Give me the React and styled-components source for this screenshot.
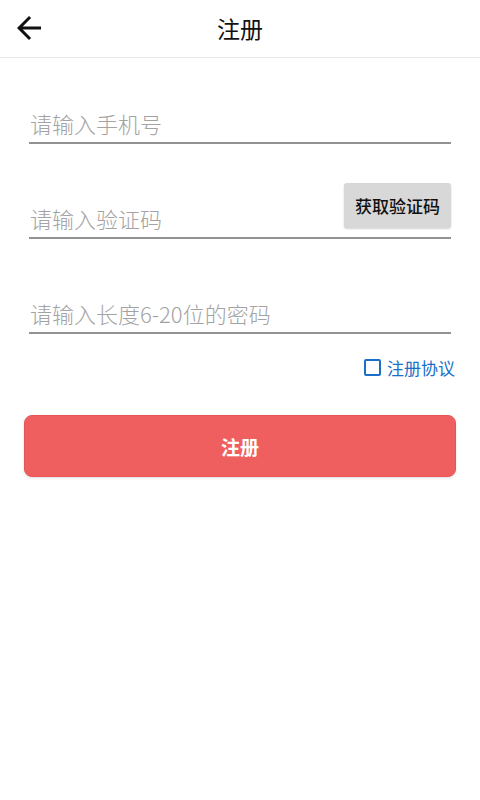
import React, { useState } from "react";
import styled, { createGlobalStyle } from "styled-components";

const GlobalStyle = createGlobalStyle`
  html, body {
    margin: 0;
    padding: 0;
    background: #ffffff;
    font-family: "Noto Sans CJK SC", "Noto Sans", sans-serif;
  }
  * {
    box-sizing: border-box;
  }
`;

export default function App() {
  const [agree, setAgree] = useState(false);
  return (
    <Root>
      <GlobalStyle />
      <Header>
        <BackBtn aria-label="back">
          <svg width="36" height="36" viewBox="0 0 24 24">
            <path
              fill="#111"
              d="M20 11H7.83l5.59-5.59L12 4l-8 8 8 8 1.41-1.41L7.83 13H20v-2z"
            />
          </svg>
        </BackBtn>
        <Title>注册</Title>
      </Header>

      <Form>
        <Field $h={86}>
          <Input placeholder="请输入手机号" />
        </Field>
        <Field>
          <Input placeholder="请输入验证码" />
          <CodeBtn>获取验证码</CodeBtn>
        </Field>
        <Field>
          <Input type="password" placeholder="请输入长度6-20位的密码" />
        </Field>

        <Agreement onClick={() => setAgree(!agree)}>
          <Check $on={agree} />
          <span>注册协议</span>
        </Agreement>

        <Submit>注册</Submit>
      </Form>
    </Root>
  );
}

const Root = styled.div`
  width: 100%;
  min-height: 800px;
  background: #fff;
`;

const Header = styled.header`
  position: relative;
  height: 58px;
  display: flex;
  align-items: center;
  justify-content: center;
  border-bottom: 1px solid #e6e6e6;
`;

const BackBtn = styled.button`
  position: absolute;
  left: 11px;
  top: 10px;
  width: 36px;
  height: 36px;
  padding: 0;
  border: none;
  background: transparent;
  display: flex;
  cursor: pointer;
`;

const Title = styled.h1`
  margin: 0 0 1px;
  font-size: 23px;
  font-weight: 400;
  color: #111;
  line-height: 1;
`;

const Form = styled.div`
  padding: 0 29px;
  display: flex;
  flex-direction: column;
`;

const Field = styled.div`
  height: ${(p) => p.$h || 95}px;
  display: flex;
  align-items: flex-end;
  border-bottom: 2px solid #929292;
`;

const Input = styled.input`
  flex: 1;
  min-width: 0;
  height: 32px;
  margin-bottom: 3px;
  padding: 0 0 0 1px;
  border: none;
  outline: none;
  background: transparent;
  font-family: inherit;
  font-size: 22px;
  font-weight: 300;
  line-height: 32px;
  color: #333;
  &::placeholder {
    color: #a3a3a3;
  }
`;

const CodeBtn = styled.button`
  width: 107px;
  height: 45px;
  margin-bottom: 9px;
  padding: 0;
  border: none;
  border-radius: 3px;
  background: #d8d8d8;
  box-shadow: 0 1px 2px rgba(0, 0, 0, 0.18);
  font-family: inherit;
  font-size: 17px;
  font-weight: 500;
  color: #111;
  cursor: pointer;
`;

const Agreement = styled.label`
  align-self: flex-end;
  margin: 25px -4px 0 0;
  display: flex;
  align-items: center;
  gap: 6px;
  height: 17px;
  font-size: 17px;
  color: #1a6fc9;
  cursor: pointer;
`;

const Check = styled.span`
  width: 17px;
  height: 17px;
  border: 2px solid #1a6fc9;
  border-radius: 2px;
  background: ${(p) => (p.$on ? "#1a6fc9" : "transparent")};
`;

const Submit = styled.button`
  margin: 39px -5px 0 -5px;
  height: 62px;
  border: 1px solid #e85555;
  border-radius: 8px;
  background: #f05f5f;
  box-shadow: 0 1px 3px rgba(0, 0, 0, 0.12);
  font-family: inherit;
  font-size: 19px;
  font-weight: 700;
  color: #fff;
  cursor: pointer;
`;
